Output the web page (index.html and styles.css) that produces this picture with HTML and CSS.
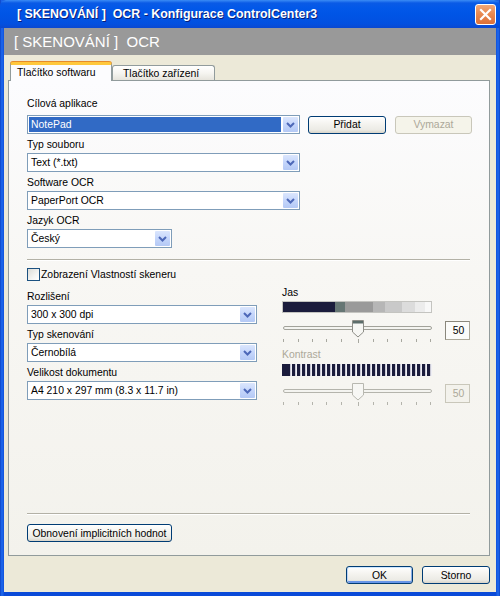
FILE: index.html
```html
<!DOCTYPE html>
<html lang="cs">
<head>
<meta charset="utf-8">
<title>OCR - Konfigurace ControlCenter3</title>
<link rel="stylesheet" href="styles.css">
</head>
<body>
<div class="window">
  <div class="titlebar">
    <span class="title">[&nbsp;SKENOVÁNÍ&nbsp;]&nbsp; OCR - Konfigurace ControlCenter3</span>
    <span class="close"><svg width="13" height="13" viewBox="0 0 13 13"><path d="M2 2 L11 11 M11 2 L2 11" stroke="#fff" stroke-width="2.2" stroke-linecap="square"/></svg></span>
  </div>
  <div class="client">
    <div class="banner">[&nbsp;SKENOVÁNÍ&nbsp;]&nbsp; OCR</div>
    <div class="tabs">
      <div class="tab active">Tlačítko softwaru</div>
      <div class="tab">Tlačítko zařízení</div>
    </div>
    <div class="panel">
      <div class="label first">Cílová aplikace</div>
      <div class="row">
        <div class="select w-full"><span class="value selected">NotePad</span><span class="arrow"><svg width="15" height="15" viewBox="0 0 15 15"><path d="M4 6 L7.5 9.5 L11 6" fill="none" stroke="#4d68b8" stroke-width="2"/></svg></span></div>
        <div class="btn add">Přidat</div>
        <div class="btn del disabled">Vymazat</div>
      </div>
      <div class="label">Typ souboru</div>
      <div class="select w-full"><span class="value">Text (*.txt)</span><span class="arrow"><svg width="15" height="15" viewBox="0 0 15 15"><path d="M4 6 L7.5 9.5 L11 6" fill="none" stroke="#4d68b8" stroke-width="2"/></svg></span></div>
      <div class="label">Software OCR</div>
      <div class="select w-full"><span class="value">PaperPort OCR</span><span class="arrow"><svg width="15" height="15" viewBox="0 0 15 15"><path d="M4 6 L7.5 9.5 L11 6" fill="none" stroke="#4d68b8" stroke-width="2"/></svg></span></div>
      <div class="label">Jazyk OCR</div>
      <div class="select w-short"><span class="value">Český</span><span class="arrow"><svg width="15" height="15" viewBox="0 0 15 15"><path d="M4 6 L7.5 9.5 L11 6" fill="none" stroke="#4d68b8" stroke-width="2"/></svg></span></div>

      <div class="sep sep-top"></div>

      <div class="check-row"><span class="checkbox"></span><span>Zobrazení Vlastností skeneru</span></div>

      <div class="columns">
        <div class="col-left">
          <div class="label tight">Rozlišení</div>
          <div class="select w-mid"><span class="value">300 x 300 dpi</span><span class="arrow"><svg width="15" height="15" viewBox="0 0 15 15"><path d="M4 6 L7.5 9.5 L11 6" fill="none" stroke="#4d68b8" stroke-width="2"/></svg></span></div>
          <div class="label">Typ skenování</div>
          <div class="select w-mid"><span class="value">Černobílá</span><span class="arrow"><svg width="15" height="15" viewBox="0 0 15 15"><path d="M4 6 L7.5 9.5 L11 6" fill="none" stroke="#4d68b8" stroke-width="2"/></svg></span></div>
          <div class="label">Velikost dokumentu</div>
          <div class="select w-mid"><span class="value">A4 210 x 297 mm (8.3 x 11.7 in)</span><span class="arrow"><svg width="15" height="15" viewBox="0 0 15 15"><path d="M4 6 L7.5 9.5 L11 6" fill="none" stroke="#4d68b8" stroke-width="2"/></svg></span></div>
        </div>
        <div class="col-right">
          <div class="label tight">Jas</div>
          <div class="bar bar-jas"></div>
          <div class="slider-row">
            <svg class="slider" width="152" height="30" viewBox="0 0 152 30">
              <rect x="1.5" y="8.5" width="148" height="3" rx="1.5" fill="#f4f4f0" stroke="#a2a29a"/>
              <g stroke="#a8a8a0" stroke-width="1">
                <path d="M1.5 21v3M16.5 21v3M30.5 21v3M44.5 21v3M59.5 21v3M76.5 21v4M91.5 21v3M105.5 21v3M119.5 21v3M134.5 21v3M148.5 21v3"/>
              </g>
              <path d="M70.5 2.5 h11 v11.5 l-5.5 5 l-5.5 -5 z" fill="#f7f7f4" stroke="#8e8e88"/>
              <rect x="71" y="3" width="10" height="2.5" fill="#5c6d6a"/>
            </svg>
            <div class="num">50</div>
          </div>
          <div class="label tight disabled-text">Kontrast</div>
          <div class="bar bar-kontrast"></div>
          <div class="slider-row">
            <svg class="slider" width="152" height="30" viewBox="0 0 152 30">
              <rect x="1.5" y="8.5" width="148" height="3" rx="1.5" fill="#f4f4f0" stroke="#b4b4ac"/>
              <g stroke="#b4b4ac" stroke-width="1">
                <path d="M1.5 21v3M16.5 21v3M30.5 21v3M44.5 21v3M59.5 21v3M76.5 21v4M91.5 21v3M105.5 21v3M119.5 21v3M134.5 21v3M148.5 21v3"/>
              </g>
              <path d="M70.5 2.5 h11 v11.5 l-5.5 5 l-5.5 -5 z" fill="#f7f7f4" stroke="#b8b8b0"/>
            </svg>
            <div class="num disabled">50</div>
          </div>
        </div>
      </div>

      <div class="spacer"></div>
      <div class="sep sep-bottom"></div>
      <div class="btn reset">Obnovení implicitních hodnot</div>
    </div>
    <div class="footer">
      <div class="btn ok">OK</div>
      <div class="btn cancel">Storno</div>
    </div>
  </div>
</div>
</body>
</html>
```
FILE: styles.css
```css
* { box-sizing: border-box; }
html, body { margin: 0; padding: 0; }
body {
  width: 500px;
  height: 596px;
  font-family: "Liberation Sans", Arial, sans-serif;
  font-size: 10.4px;
  color: #000;
  overflow: hidden;
}
.window {
  width: 500px;
  height: 596px;
  display: flex;
  flex-direction: column;
  background: linear-gradient(90deg, #0838b8 0, #1a62e8 1px, #1a62e8 3px, #0a4ad8 4px, #0a4ad8 496px, #1a62e8 497px, #1a62e8 499px, #0838b8 500px);
}
.titlebar {
  height: 28px;
  flex: none;
  display: flex;
  align-items: center;
  justify-content: space-between;
  padding-left: 17px;
  padding-right: 4px;
  background: linear-gradient(180deg, #3b8cf5 0, #0a5ae6 3px, #0258e8 8px, #0055e6 50%, #0250e0 85%, #0a48d0 100%);
  border-radius: 6px 6px 0 0;
}
.title {
  color: #fff;
  font-weight: bold;
  font-size: 12.4px;
  text-shadow: 1px 1px 0 #0a1e78;
  white-space: nowrap;
}
.close {
  width: 21px;
  height: 21px;
  display: flex;
  align-items: center;
  justify-content: center;
  border: 1px solid #fff;
  border-radius: 3px;
  background: linear-gradient(180deg, #f3a878 0, #e88a52 45%, #dc7038 100%);
}
.client {
  flex: 1;
  margin: 0 4px 4px 4px;
  background: #ece9d8;
  display: flex;
  flex-direction: column;
}
.banner {
  height: 27px;
  flex: none;
  background: #999999;
  color: #fff;
  font-size: 15px;
  line-height: 27px;
  padding-left: 10px;
  white-space: nowrap;
}
.tabs {
  margin-top: 7px;
  height: 18px;
  display: flex;
  align-items: flex-end;
  padding-left: 6px;
  flex: none;
}
.tab {
  height: 15px;
  width: 103px;
  padding-left: 10px;
  line-height: 15px;
  border: 1px solid #919b9c;
  border-bottom: none;
  border-radius: 3px 3px 0 0;
  background: linear-gradient(180deg, #ffffff 0, #f6f5f1 50%, #e6e4dc 100%);
  white-space: nowrap;
}
.tab.active {
  position: relative;
  z-index: 1;
  height: 19px;
  width: 102px;
  margin-bottom: -1px;
  padding-left: 6px;
  line-height: 16px;
  background: #fcfcfe;
  border-top: 3px solid #ffc83c;
  box-shadow: 0 -1px 0 #e68b2c;
}
.panel {
  flex: none;
  height: 476px;
  margin: 0 6px 0 4px;
  border: 1px solid #919b9c;
  background: linear-gradient(180deg, #fcfcfe 0, #f8f7f4 40%, #f3f2ec 100%);
  padding: 16px 19px 13px 18px;
  display: flex;
  flex-direction: column;
  align-items: flex-start;
}
.label {
  height: 14px;
  line-height: 14px;
  margin-top: 4px;
  margin-bottom: 1px;
  white-space: nowrap;
}
.label.first { margin-top: 0; margin-bottom: 4px; }
.label.tight { margin-top: 0; }
.disabled-text { color: #aca899; }
.row {
  display: flex;
  align-items: center;
}
.select {
  height: 19px;
  border: 1px solid #7f9db9;
  background: #fff;
  display: flex;
  align-items: stretch;
  flex: none;
}
.w-full { width: 273px; }
.w-short { width: 145px; }
.w-mid { width: 230px; }
.value {
  flex: 1;
  margin: 1px;
  padding-left: 2px;
  line-height: 15px;
  white-space: nowrap;
  overflow: hidden;
}
.value.selected {
  background: #316ac5;
  color: #fff;
}
.arrow {
  width: 15px;
  margin: 1px;
  border-radius: 1px;
  background: linear-gradient(180deg, #dbe6fd 0, #c5d6fb 50%, #b4c9f5 100%);
  display: flex;
  align-items: center;
  justify-content: center;
}
.btn {
  height: 18px;
  border: 1px solid #003c74;
  border-radius: 3px;
  background: linear-gradient(180deg, #ffffff 0, #f5f4f0 40%, #ecebe5 80%, #d8d4c9 100%);
  display: flex;
  align-items: center;
  justify-content: center;
  white-space: nowrap;
  flex: none;
}
.btn.add { width: 78px; margin-left: 8px; }
.btn.del { width: 77px; margin-left: 9px; }
.btn.disabled {
  border-color: #c9c7ba;
  background: #f5f4ea;
  color: #aca899;
}
.sep {
  width: 443px;
  height: 2px;
  border-top: 1px solid #b3b1a6;
  border-bottom: 1px solid #ffffff;
  flex: none;
}
.sep-top { margin-top: 11px; margin-bottom: 7px; }
.sep-bottom { margin-bottom: 9px; }
.check-row {
  height: 13px;
  display: flex;
  align-items: center;
  gap: 1px;
  white-space: nowrap;
}
.checkbox {
  width: 13px;
  height: 13px;
  border: 1px solid #1c5180;
  background: linear-gradient(135deg, #dcdcd7 0, #f4f4f2 60%, #ffffff 100%);
  flex: none;
}
.columns {
  margin-top: 5px;
  display: flex;
  gap: 25px;
}
.col-left {
  width: 230px;
  padding-top: 4px;
  display: flex;
  flex-direction: column;
}
.col-right {
  width: 188px;
  display: flex;
  flex-direction: column;
}
.bar {
  width: 150px;
  height: 12px;
  flex: none;
}
.bar-jas {
  border: 1px solid #c4c4c0;
  background: linear-gradient(90deg,
    #1b1c3c 0 52px, #667674 52px 62px, #9a9a9a 62px 90px,
    #b6b6b6 90px 102px, #c9c9c9 102px 119px, #dcdcdc 119px 132px,
    #ececec 132px 142px, #f8f8f8 142px 150px);
}
.bar-kontrast {
  margin-top: 1px;
  background:
    linear-gradient(90deg, #1b1c3c 0 6px, transparent 6px 150px),
    repeating-linear-gradient(90deg, #1b1c3c 0 3px, #c8c8d4 3px 3.6px, #eeeef4 3.6px 5px);
}
.slider-row {
  margin-top: 5px;
  display: flex;
  align-items: flex-start;
  height: 30px;
}
.slider { display: block; flex: none; }
.num {
  margin-left: 11px;
  margin-top: 3px;
  width: 25px;
  height: 19px;
  border: 1px solid #aca899;
  border-top-color: #8a877c;
  border-left-color: #8a877c;
  background: #fbfbf9;
  display: flex;
  align-items: center;
  justify-content: center;
  padding-left: 2px;
}
.num.disabled {
  color: #aca899;
  border-color: #c9c7ba;
  background: #f3f2ec;
}
.spacer { flex: 1; }
.btn.reset { width: 145px; }
.footer {
  flex: none;
  margin-top: 10px;
  padding-right: 6px;
  display: flex;
  justify-content: flex-end;
  gap: 9px;
}
.btn.ok {
  width: 67px;
  box-shadow: inset 0 1px 0 #cee7ff, inset 1px 0 0 #bcd4f6, inset -1px 0 0 #89ade4, inset 0 -2px 0 #6996e8;
}
.btn.cancel { width: 68px; }
```
